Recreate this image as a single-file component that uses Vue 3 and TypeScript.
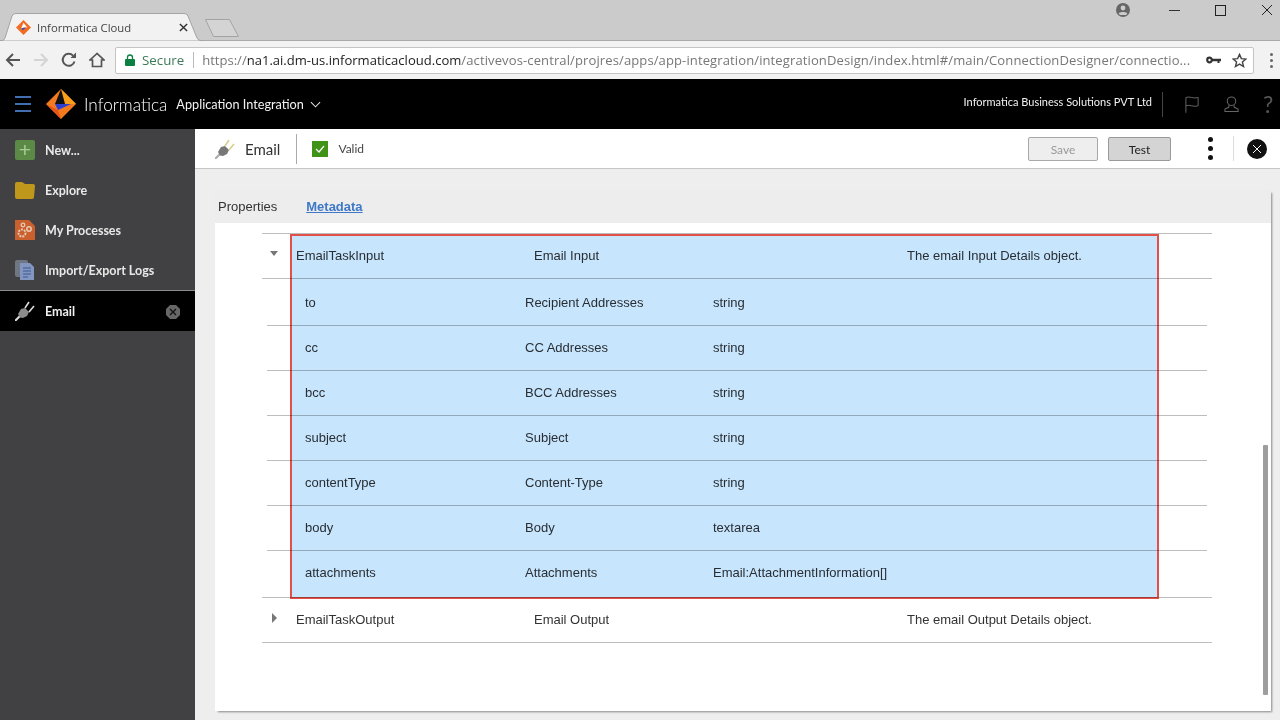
<script setup lang="ts">
interface Field { name: string; title: string; type: string }
const fields: Field[] = [
  { name: 'to', title: 'Recipient Addresses', type: 'string' },
  { name: 'cc', title: 'CC Addresses', type: 'string' },
  { name: 'bcc', title: 'BCC Addresses', type: 'string' },
  { name: 'subject', title: 'Subject', type: 'string' },
  { name: 'contentType', title: 'Content-Type', type: 'string' },
  { name: 'body', title: 'Body', type: 'textarea' },
  { name: 'attachments', title: 'Attachments', type: 'Email:AttachmentInformation[]' },
]
</script>

<template>
  <div class="page">
    <header class="tabstrip">
      <div class="tab">
        <svg class="tab-shape" viewBox="0 0 204 28"><path d="M0 27.500H2Q4 27.500 5 25L12 3Q13 .5 16 .5H184Q187 .5 188 3L197 25Q198 27.500 201 27.500H204" fill="#f2f2f2" stroke="#a4a4a4" stroke-width="1"/></svg>
        <svg class="favicon" viewBox="0 0 16 16"><path d="M8 0 16 8 8 16 0 8Z" fill="#f26b21"/><path d="M8 3 12 8H8L5 10Z" fill="#fff"/><path d="M5 9 11 8 7 11Z" fill="#2c4fb8"/></svg>
        <span class="tab-title">Informatica Cloud</span>
        <svg class="tab-close" viewBox="0 0 10 10"><path d="M1 1 9 9M9 1 1 9" stroke="#333" stroke-width="1.6"/></svg>
      </div>
      <svg class="newtab" viewBox="0 0 36 18"><path d="M1.500 .5H25.500L34.500 17.500H9.500Z" fill="#d4d4d4" stroke="#a4a4a4" stroke-width="1"/></svg>
      <div class="window-btns">
        <svg class="profile" viewBox="0 0 14 14"><circle cx="7" cy="7" r="7" fill="#666"/><circle cx="7" cy="5" r="2.400" fill="#ccc"/><path d="M2.600 10.600C4 8.600 10 8.600 11.400 10.600L10 12H4Z" fill="#ccc"/></svg>
        <span class="min"></span>
        <span class="max"></span>
        <svg class="winx" viewBox="0 0 12 12"><path d="M1 1 11 11M11 1 1 11" stroke="#222" stroke-width="1"/></svg>
      </div>
    </header>

    <nav class="toolbar">
      <svg class="navicon" viewBox="0 0 16 16"><path d="M15 8H2M8 2 2 8l6 6" fill="none" stroke="#555" stroke-width="2"/></svg>
      <svg class="navicon" viewBox="0 0 16 16"><path d="M1 8h13M8 2l6 6-6 6" fill="none" stroke="#d4d4d4" stroke-width="2"/></svg>
      <svg class="navicon" viewBox="0 0 16 16"><path d="M13.500 9.500A6 6 0 1 1 12 3.600" fill="none" stroke="#555" stroke-width="2"/><path d="M9.500 6H15V.5Z" fill="#555"/></svg>
      <svg class="navicon" viewBox="0 0 16 16"><path d="M8 1.500 1 8h2.500v6.500h9V8H15Z" fill="none" stroke="#555" stroke-width="1.700"/></svg>
      <div class="omnibox">
        <svg class="lock" viewBox="0 0 10 12"><path d="M2.500 5V3.500a2.500 2.500 0 0 1 5 0V5" fill="none" stroke="#0b8043" stroke-width="1.300"/><rect y="5" width="10" height="7" rx="1" fill="#0b8043"/></svg>
        <span class="secure">Secure</span>
        <span class="omni-sep"></span>
        <span class="url"><span class="url-dim">https://</span><span class="url-host">na1.ai.dm-us.informaticacloud.com</span><span class="url-dim url-path">/activevos-central/projres/apps/app-integration/integrationDesign/index.html#/main/ConnectionDesigner/connectio...</span></span>
        <svg class="key" viewBox="0 0 15 8"><circle cx="3.500" cy="4" r="2.300" fill="none" stroke="#333" stroke-width="2.200"/><path d="M6 2.800h9v2.400h-1.500V7h-2V5.200H6Z" fill="#333"/></svg>
        <svg class="star" viewBox="0 0 16 16"><path d="M8 1.500 10 6l4.800.4-3.700 3.200 1.200 4.800L8 11.800l-4.300 2.600 1.200-4.800L1.200 6.400 6 6Z" fill="none" stroke="#444" stroke-width="1.500"/></svg>
      </div>
      <span class="kebab-small"><i></i><i></i><i></i></span>
    </nav>

    <div class="appbar">
      <span class="burger"><i></i><i></i><i></i></span>
      <svg class="logo" viewBox="0 0 30 30"><path d="M15 0 30 15 15 30 0 15Z" fill="#f47a20"/><path d="M15 0 30 15H19Z" fill="#f9a01b"/><path d="M15 0 19 15H9Z" fill="#111"/><path d="M9 15H25L12 21Z" fill="#2b3fd0"/><path d="M0 15 12 21 15 30Z" fill="#e8551b"/></svg>
      <span class="brand">Informatica</span>
      <span class="product">Application Integration</span>
      <svg class="chev" viewBox="0 0 12 7"><path d="M1 1 6 6 11 1" fill="none" stroke="#ddd" stroke-width="1.200"/></svg>
      <span class="org">Informatica Business Solutions PVT Ltd</span>
      <span class="bar-sep"></span>
      <svg class="flag" viewBox="0 0 16 19"><path d="M1 19V1.500C5-.5 10 3.500 15 1.500V11C10 13 5 9 1 11" fill="none" stroke="#666" stroke-width="1.100"/></svg>
      <svg class="user" viewBox="0 0 16 17"><circle cx="8" cy="5.500" r="4.500" fill="none" stroke="#666" stroke-width="1.100"/><path d="M5.500 9.500 5 12 1 14v2.500h14V14l-4-2-.5-2.500" fill="none" stroke="#666" stroke-width="1.100"/></svg>
      <span class="help">?</span>
    </div>

    <div class="body">
      <aside class="sidebar">
        <div class="side-item">
          <span class="new-ic">+</span>
          <span>New...</span>
        </div>
        <div class="side-item">
          <svg class="side-ic" viewBox="0 0 20 17"><path d="M0 2Q0 0 2 0H7L10 2H18Q20 2 20 4L19 15Q19 17 17 17H2Q0 17 0 15Z" fill="#bf981b"/></svg>
          <span>Explore</span>
        </div>
        <div class="side-item">
          <svg class="side-ic tall" viewBox="0 0 20 20"><path d="M0 0H14L20 6V20H0Z" fill="#c9602e"/><circle cx="7" cy="13" r="3.500" fill="none" stroke="#e8c9b4" stroke-width="2" stroke-dasharray="2 1"/><circle cx="14" cy="9" r="2.200" fill="none" stroke="#e8c9b4" stroke-width="1.500"/><circle cx="8" cy="5" r="1.800" fill="none" stroke="#e8c9b4" stroke-width="1.300"/></svg>
          <span>My Processes</span>
        </div>
        <div class="side-item">
          <svg class="side-ic tall" viewBox="0 0 20 20"><rect x="0" y="0" width="13" height="17" rx="2" fill="#6f7784"/><path d="M5 3H15L19 7V20H5Z" fill="#8396c0"/><path d="M8 8h8M8 11h8M8 14h8M8 17h5" stroke="#3c5796" stroke-width="1.200"/></svg>
          <span>Import/Export Logs</span>
        </div>
        <div class="side-item active">
          <svg class="side-ic tall" viewBox="0 0 20 20"><path d="M0 20 5 15" stroke="#ddd" stroke-width="2"/><path d="M3 13 6 8 10 7 14 11 12 15 8 17 5 16.500Z" fill="#8c8c8c"/><path d="M10 7 14 1M14 11 19 5" stroke="#ddd" stroke-width="1.600"/></svg>
          <span>Email</span>
          <svg class="side-close" viewBox="0 0 14 14"><path d="M4 0H10L14 4V10L10 14H4L0 10V4Z" fill="#666"/><path d="M4 4 10 10M10 4 4 10" stroke="#111" stroke-width="1.300"/></svg>
        </div>
      </aside>

      <main class="main">
        <div class="subheader">
          <svg class="plug" viewBox="0 0 20 20"><path d="M0 20 5 15" stroke="#aaa" stroke-width="2"/><path d="M3 13 6 8 10 7 14 11 12 15 8 17 5 16.500Z" fill="#777"/><path d="M10 7 14 1M14 11 19 5" stroke="#d8cf8f" stroke-width="1.600"/></svg>
          <span class="sub-title">Email</span>
          <span class="sub-sep"></span>
          <span class="valid-box"><svg viewBox="0 0 16 16"><path d="M4 8 7 11 12 5" fill="none" stroke="#fff" stroke-width="1.200"/></svg></span>
          <span class="valid">Valid</span>
          <button class="btn disabled" type="button">Save</button>
          <button class="btn test" type="button">Test</button>
          <span class="kebab"><i></i><i></i><i></i></span>
          <span class="sub-sep2"></span>
          <span class="close-round"><svg viewBox="0 0 10 10"><path d="M1 1 9 9M9 1 1 9" stroke="#fff" stroke-width="1"/></svg></span>
        </div>

        <div class="panel">
          <div class="tabs">
            <span class="tab-plain">Properties</span>
            <span class="tab-link">Metadata</span>
          </div>
          <div class="card">
            <div class="table">
              <div class="row top">
                <span class="tri down"></span>
                <span class="c-name">EmailTaskInput</span>
                <span class="c-title">Email Input</span>
                <span class="c-desc">The email Input Details object.</span>
              </div>
              <div v-for="(f, i) in fields" :key="f.name" class="row sub" :class="{ tall: i === 0, last: i === fields.length - 1 }">
                <span class="s-name">{{ f.name }}</span>
                <span class="s-title">{{ f.title }}</span>
                <span class="s-type">{{ f.type }}</span>
              </div>
              <div class="row top closed">
                <span class="tri right"></span>
                <span class="c-name">EmailTaskOutput</span>
                <span class="c-title">Email Output</span>
                <span class="c-desc">The email Output Details object.</span>
              </div>
            </div>
            <div class="highlight"></div>
            <div class="scrollthumb"></div>
          </div>
        </div>
      </main>
    </div>
  </div>
</template>

<style>
html, body { margin: 0; background: #000; }
</style>

<style scoped>
.page { width: 1280px; height: 720px; overflow: hidden; display: flex; flex-direction: column; font-family: "Liberation Sans", Arial, sans-serif; position: relative; }

.tabstrip { height: 41px; flex: none; background: #cbcbcb; border-bottom: 1px solid #a9a9a9; box-sizing: border-box; display: flex; align-items: flex-end; position: relative; }
.tab { width: 204px; height: 28px; box-sizing: border-box; display: flex; align-items: center; padding: 0 16px 0 16px; margin-bottom: -1px; position: relative; }
.tab-shape { position: absolute; left: 0; top: 0; width: 204px; height: 28px; }
.favicon { width: 15px; height: 15px; margin-right: 6px; position: relative; }
.tab-title { font: 11.300px "Open Sans", sans-serif; color: #444; flex: 1; position: relative; }
.tab-close { width: 9px; height: 9px; position: relative; }
.newtab { width: 36px; height: 18px; margin: 0 0 3px 0; }
.window-btns { position: absolute; top: 3px; right: 0; display: flex; align-items: center; }
.profile { width: 14px; height: 14px; margin-right: 39px; }
.min { width: 11px; height: 1px; background: #333; margin-right: 35px; }
.max { width: 9px; height: 9px; border: 1px solid #222; margin-right: 35px; }
.winx { width: 12px; height: 12px; margin-right: 7px; }

.toolbar { height: 38px; flex: none; background: #f2f2f2; box-sizing: border-box; display: flex; align-items: center; padding-left: 5px; }
.navicon { width: 16px; height: 16px; margin-right: 12px; flex: none; }
.omnibox { margin-left: -2px; width: 1139px; height: 27px; box-sizing: border-box; background: #fff; border: 1px solid #c4c4c4; border-radius: 2px; display: flex; align-items: center; padding-left: 9px; }
.lock { width: 10px; height: 12px; margin-right: 7px; }
.secure { font: 13.300px "Open Sans", sans-serif; color: #3b7a57; }
.omni-sep { width: 1px; height: 16px; background: #bbb; margin: 0 8px 0 9px; }
.url { font: 13.050px "Open Sans", sans-serif; flex: 1; min-width: 0; white-space: nowrap; overflow: hidden; }
.url-dim { color: #777; }
.url-host { color: #222; }
.url-path { letter-spacing: .1px; }
.key { width: 15px; height: 8px; margin: 0 11px 0 4px; flex: none; }
.star { width: 15px; height: 15px; margin-right: 6px; flex: none; }
.kebab-small { display: flex; flex-direction: column; gap: 3px; margin-left: 16px; }
.kebab-small i { width: 3px; height: 3px; background: #666; border-radius: 50%; }

.appbar { height: 50px; flex: none; background: #000; display: flex; align-items: center; color: #fff; padding-left: 15px; position: relative; }
.burger { display: flex; flex-direction: column; gap: 5px; margin-right: 15px; }
.burger i { width: 16px; height: 2px; background: #3f6fb0; }
.logo { width: 30px; height: 30px; margin-right: 8px; }
.brand { font: 300 17.200px "Lato", sans-serif; color: #fff; margin-right: 9px; }
.product { font: 12.700px "Lato", sans-serif; color: #f2f2f2; }
.chev { width: 11px; height: 7px; margin-left: 6px; }
.org { font: 11px "Lato", sans-serif; margin-left: auto; margin-bottom: 6px; color: #f2f2f2; }
.bar-sep { width: 1px; height: 25px; background: #444; margin: 0 22px 0 10px; }
.flag { width: 14px; height: 17px; margin-right: 25px; }
.user { width: 15px; height: 16px; margin-right: 24px; }
.help { font: 23px "Lato", sans-serif; color: #555; width: 17px; }

.body { flex: 1; display: flex; min-height: 0; }
.sidebar { width: 195px; flex: none; background: #414042; display: flex; flex-direction: column; padding-top: 1px; box-sizing: border-box; }
.side-item { height: 40px; display: flex; align-items: center; padding-left: 15px; font: 700 12.500px "Lato", sans-serif; color: #e8e8e8; }
.side-item.active { background: #000; border-top: 1px solid #8a8a8a; color: #f0f0f0; position: relative; height: 41px; box-sizing: border-box; }
.new-ic { width: 20px; height: 20px; border-radius: 2px; background: #5a8a45; color: #a9c99a; font: 400 21px/19px "Liberation Sans", sans-serif; text-align: center; margin-right: 10px; flex: none; }
.side-ic { width: 20px; height: 17px; margin-right: 10px; flex: none; }
.side-ic.tall { height: 20px; }
.side-close { position: absolute; right: 15px; top: 14px; width: 14px; height: 14px; }

.main { flex: 1; min-width: 0; background: #eeeeee; display: flex; flex-direction: column; }
.subheader { height: 40px; flex: none; box-sizing: border-box; background: #fff; border-bottom: 1px solid #c6c6c6; display: flex; align-items: center; padding-left: 20px; }
.plug { width: 20px; height: 20px; margin-right: 10px; }
.sub-title { font: 15px "Lato", sans-serif; color: #333; }
.sub-sep { width: 1px; height: 30px; background: #aaa; margin: 0 15px 0 16px; }
.valid-box { width: 16px; height: 16px; background: #3f9417; display: block; margin-right: 10px; margin-top: 1px; }
.valid-box svg { display: block; }
.valid { font: 12px "Lato", sans-serif; color: #444; }
.btn { height: 24px; box-sizing: border-box; border: 1px solid #a8a8a8; border-radius: 2px; font: 12px "Lato", sans-serif; padding: 2px 0 0; }
.btn.disabled { width: 70px; margin-left: auto; background: #eeeeee; color: #999; }
.btn.test { width: 63px; margin-left: 10px; margin-right: 1px; background: #d4d4d4; border-color: #999; color: #222; }
.kebab { display: flex; flex-direction: column; gap: 4px; margin-left: 36px; }
.kebab i { width: 5px; height: 5px; background: #111; border-radius: 50%; }
.sub-sep2 { width: 1px; height: 25px; background: #ddd; margin: 0 13px 0 20px; }
.close-round { width: 20px; height: 20px; border-radius: 50%; background: #111; display: flex; align-items: center; justify-content: center; margin-right: 13px; }
.close-round svg { width: 10px; height: 10px; }

.panel { margin: 21px 9px 9px 20px; flex: 1; min-height: 0; display: flex; flex-direction: column; box-shadow: 2px 2px 2px -1px #888; background: #ededed; }
.tabs { height: 33px; flex: none; display: flex; align-items: center; padding: 0 0 0 3px; box-sizing: border-box; font-size: 13px; }
.tab-plain { color: #333; }
.tab-link { color: #3f78c8; font-weight: 700; text-decoration: underline; margin-left: 29px; }
.card { flex: 1; min-height: 0; background: #fff; position: relative; padding: 10px 59px 0 47px; }
.table { display: flex; flex-direction: column; border-top: 1px solid #bdbdbd; }
.row { display: flex; align-items: center; box-sizing: border-box; font-size: 13px; color: #333; position: relative; padding-bottom: 2px; }
.row.top { height: 45px; border-bottom: 1px solid #bdbdbd; padding-left: 34px; }
.row.closed { height: 45px; }
.row.sub { height: 45px; margin-left: 5px; margin-right: 5px; border-bottom: 1px solid #bdbdbd; padding-left: 38px; }
.row.sub.tall { height: 47px; padding-bottom: 0; }
.row.sub.last { height: 47px; margin-left: 0; margin-right: 0; padding-left: 43px; padding-bottom: 3px; }
.c-name { width: 238px; flex: none; }
.c-title { width: 373px; flex: none; }
.s-name { width: 220px; flex: none; }
.s-title { width: 188px; flex: none; }
.tri { position: absolute; }
.tri.down { left: 8px; top: 17px; border-left: 4.500px solid transparent; border-right: 4.500px solid transparent; border-top: 5px solid #777; }
.tri.right { left: 10px; top: 15px; border-top: 5px solid transparent; border-bottom: 5px solid transparent; border-left: 5px solid #777; }
.highlight { position: absolute; left: 75px; top: 11px; width: 869px; height: 365px; box-sizing: border-box; border: 2px solid #e2504a; background: #c7e5fd; mix-blend-mode: multiply; }
.scrollthumb { position: absolute; right: 3px; top: 222px; width: 5px; height: 250px; background: #9e9e9e; border-radius: 1px; }
</style>
